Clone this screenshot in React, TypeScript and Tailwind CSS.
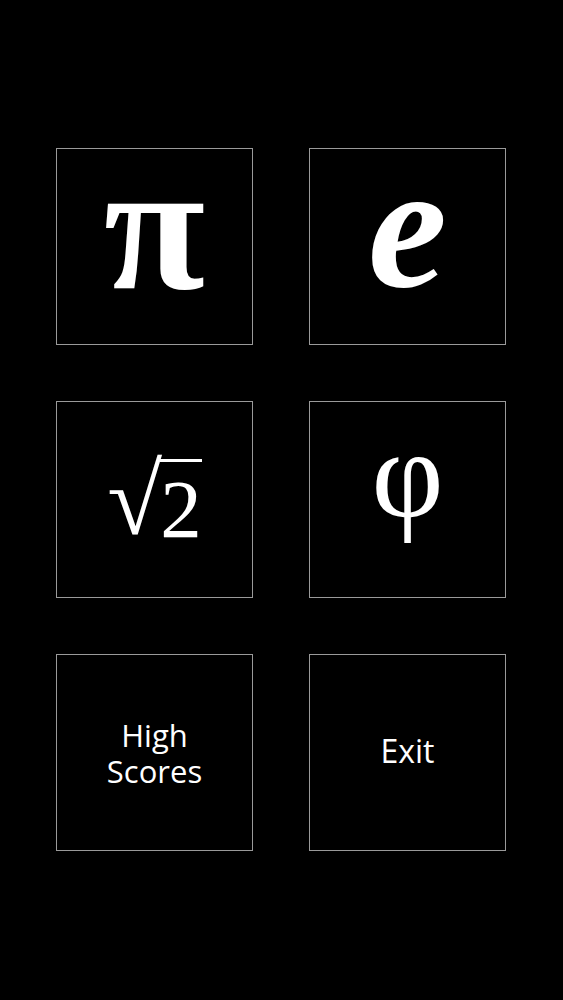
import React from "react";

function Tile({ children }: { children: React.ReactNode }) {
  return (
    <button className="w-[197px] h-[197px] border border-[#9a9a9a] bg-black flex items-center justify-center text-white">
      {children}
    </button>
  );
}

export default function App() {
  return (
    <div className="min-h-screen w-full bg-black flex items-center justify-center pr-px pb-px">
      <div className="grid grid-cols-2 gap-[56px]">
        <Tile>
          <span className="font-['Liberation_Serif',serif] text-[185px] leading-none font-bold -translate-y-[21px]">π</span>
        </Tile>
        <Tile>
          <span className="font-['Liberation_Serif',serif] text-[178px] leading-none italic font-bold -translate-y-[21px]">e</span>
        </Tile>
        <Tile>
          <span className="font-['Liberation_Serif',serif] leading-none flex items-end translate-y-[1px]">
            <span className="text-[100px] leading-none">√</span>
            <span className="text-[83px] leading-none border-t-[3px] border-white pt-[6px] -ml-[2px]">2</span>
          </span>
        </Tile>
        <Tile>
          <span className="font-['Liberation_Serif',serif] text-[125px] leading-none -translate-y-[25px]">φ</span>
        </Tile>
        <Tile>
          <span className="font-['Open_Sans',sans-serif] text-[31px] leading-[36px] text-center">
            High
            <br />
            Scores
          </span>
        </Tile>
        <Tile>
          <span className="font-['Open_Sans',sans-serif] text-[32px] leading-[36px] -translate-y-[2px]">Exit</span>
        </Tile>
      </div>
    </div>
  );
}
